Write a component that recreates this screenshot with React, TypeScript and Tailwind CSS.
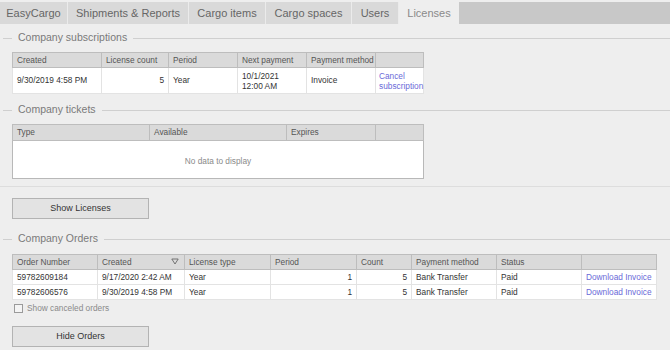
import React from 'react'

const tabs = [
  { label: 'EasyCargo', w: 'w-[68px]' },
  { label: 'Shipments & Reports', w: 'w-[121px]' },
  { label: 'Cargo items', w: 'w-[77px]' },
  { label: 'Cargo spaces', w: 'w-[86px]' },
  { label: 'Users', w: 'w-[47px]' },
]

const grid = "font-['Liberation_Sans',Arial,sans-serif] text-[8.3px] leading-none whitespace-nowrap"
const th = 'border border-[#bdbdbd] bg-[#dadada] px-[4px] text-left font-normal text-[#555] h-[15px]'
const td = 'border border-[#e3e3e3] px-[4px]'
const dark = 'text-[#333]'
const link = 'text-[#6a6ad8]'

function Legend({ title }: { title: string }) {
  return (
    <div className="flex h-[14px] items-center">
      <div className="ml-[3px] h-px w-[9px] bg-[#cfcfcf]" />
      <span className="px-[6px] font-['Liberation_Sans',Arial,sans-serif] text-[10.5px] text-[#7a7a7a]">{title}</span>
      <div className="h-px flex-1 bg-[#cfcfcf]" />
    </div>
  )
}

function Button({ label }: { label: string }) {
  return (
    <button className="ml-[12px] flex h-[21px] w-[137px] items-center justify-center border border-[#b3b3b3] bg-[#e3e3e3] font-['Liberation_Sans',Arial,sans-serif] text-[9px] text-[#333]">
      {label}
    </button>
  )
}

export default function App() {
  const orders = [
    { no: '59782609184', created: '9/17/2020 2:42 AM' },
    { no: '59782606576', created: '9/30/2019 4:58 PM' },
  ]

  return (
    <div className="h-[350px] w-[670px] overflow-hidden bg-[#eeeeee]">
      {/* tab bar */}
      <div className="flex h-[24px] pt-[2px] font-['Liberation_Sans',Arial,sans-serif] text-[11px]">
        {tabs.map(t => (
          <div key={t.label} className={`${t.w} flex items-center justify-center border-r border-[#ebebeb] bg-[#d9d9d9] text-[#666]`}>
            {t.label}
          </div>
        ))}
        <div className="flex w-[60px] items-center justify-center bg-[#eeeeee] text-[#8a8a8a]">Licenses</div>
        <div className="flex-1 bg-[#c8c8c8]" />
      </div>

      <div className="mt-[7px]">
        <Legend title="Company subscriptions" />
      </div>
      <table className={`ml-[12px] mt-[7px] w-[412px] table-fixed border-collapse border border-[#b8b8b8] bg-white ${grid}`}>
        <colgroup>
          <col className="w-[89px]" />
          <col className="w-[67px]" />
          <col className="w-[69px]" />
          <col className="w-[69px]" />
          <col className="w-[69px]" />
          <col />
        </colgroup>
        <thead>
          <tr>
            <th className={th}>Created</th>
            <th className={th}>License count</th>
            <th className={th}>Period</th>
            <th className={th}>Next payment</th>
            <th className={th}>Payment method</th>
            <th className={th}></th>
          </tr>
        </thead>
        <tbody>
          <tr className="h-[26px]">
            <td className={`${td} ${dark}`}>9/30/2019 4:58 PM</td>
            <td className={`${td} ${dark} text-right`}>5</td>
            <td className={`${td} ${dark}`}>Year</td>
            <td className={`${td} ${dark} leading-[10px]`}>10/1/2021<br />12:00 AM</td>
            <td className={`${td} ${dark}`}>Invoice</td>
            <td className={`${td} ${link} pl-[3px] pr-0 leading-[10px]`}>Cancel<br />subscription</td>
          </tr>
        </tbody>
      </table>

      <div className="mt-[9px]">
        <Legend title="Company tickets" />
      </div>
      <table className={`ml-[12px] mt-[7px] w-[412px] table-fixed border-collapse border border-[#b8b8b8] bg-white ${grid}`}>
        <colgroup>
          <col className="w-[137px]" />
          <col className="w-[137px]" />
          <col className="w-[89px]" />
          <col />
        </colgroup>
        <thead>
          <tr>
            <th className={`${th} h-[16px]`}>Type</th>
            <th className={`${th} h-[16px]`}>Available</th>
            <th className={`${th} h-[16px]`}>Expires</th>
            <th className={`${th} h-[16px]`}></th>
          </tr>
        </thead>
        <tbody>
          <tr className="h-[38px]">
            <td colSpan={4} className="pt-[4px] text-center text-[#8a8a8a]">No data to display</td>
          </tr>
        </tbody>
      </table>

      <div className="mt-[7px] h-px bg-[#dddddd]" />

      <div className="mt-[11px]">
        <Button label="Show Licenses" />
      </div>

      <div className="mt-[13px]">
        <Legend title="Company Orders" />
      </div>
      <table className={`ml-[12px] mt-[8px] w-[645px] table-fixed border-collapse border border-[#b8b8b8] bg-white ${grid}`}>
        <colgroup>
          <col className="w-[85px]" />
          <col className="w-[87px]" />
          <col className="w-[86px]" />
          <col className="w-[86px]" />
          <col className="w-[55px]" />
          <col className="w-[85px]" />
          <col className="w-[85px]" />
          <col />
        </colgroup>
        <thead>
          <tr>
            <th className={th}>Order Number</th>
            <th className={th}>
              <div className="flex items-center justify-between">
                <span>Created</span>
                <svg width="8" height="7" viewBox="0 0 8 7" className="mr-[1px]">
                  <path d="M0.8 1 H7.2 L4 6 Z" fill="none" stroke="#666" strokeWidth="0.9" />
                </svg>
              </div>
            </th>
            <th className={th}>License type</th>
            <th className={th}>Period</th>
            <th className={th}>Count</th>
            <th className={th}>Payment method</th>
            <th className={th}>Status</th>
            <th className={th}></th>
          </tr>
        </thead>
        <tbody>
          {orders.map(o => (
            <tr key={o.no} className="h-[15px]">
              <td className={`${td} ${dark}`}>{o.no}</td>
              <td className={`${td} ${dark}`}>{o.created}</td>
              <td className={`${td} ${dark}`}>Year</td>
              <td className={`${td} ${dark} text-right`}>1</td>
              <td className={`${td} ${dark} text-right`}>5</td>
              <td className={`${td} ${dark}`}>Bank Transfer</td>
              <td className={`${td} ${dark}`}>Paid</td>
              <td className={`${td} ${link}`}>Download Invoice</td>
            </tr>
          ))}
        </tbody>
      </table>

      <label className={`ml-[14px] mt-[4px] flex items-center gap-[4px] ${grid} text-[#8a8a8a]`}>
        <span className="h-[9px] w-[9px] border border-[#9a9a9a] bg-[#f4f4f4]" />
        Show canceled orders
      </label>

      <div className="mt-[13px]">
        <Button label="Hide Orders" />
      </div>
    </div>
  )
}
